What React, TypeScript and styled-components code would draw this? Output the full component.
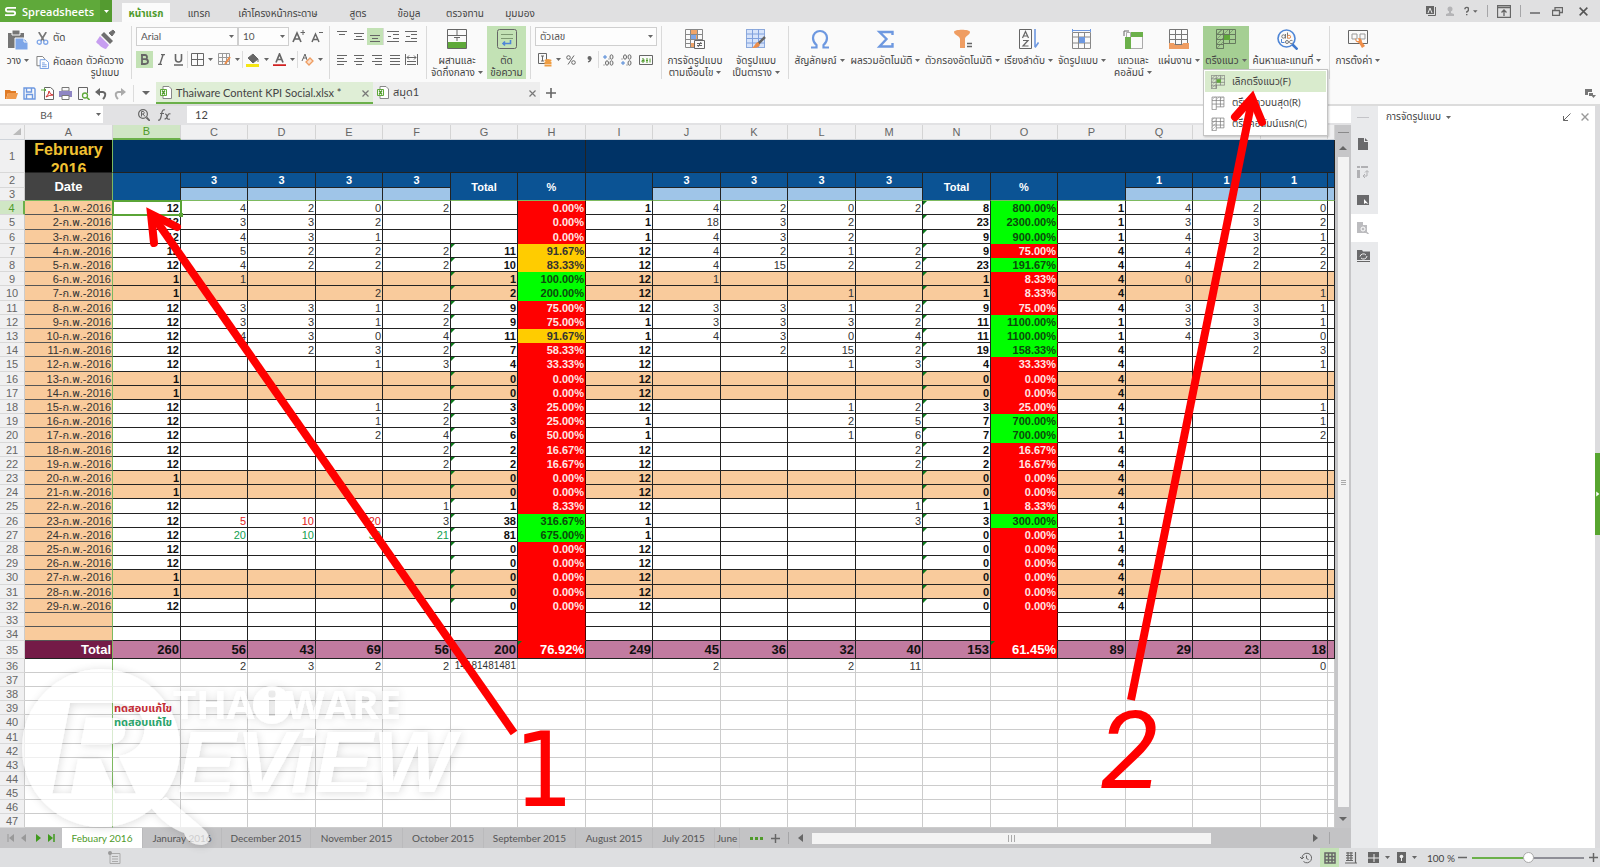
import React from "react";
import styled, { createGlobalStyle, css } from "styled-components";

const UI = `Lato, "Noto Sans Thai", "Loma", "Waree", "Noto Sans", sans-serif`;
const CELL = `"Liberation Sans", "Noto Sans Thai", "Loma", sans-serif`;

const Global = createGlobalStyle`
  * { box-sizing: border-box; }
  body { margin: 0; background: #dedfe1; font-family: ${UI}; font-size: 11px; color: #444; }
  button { border: 0; padding: 0; background: none; font: inherit; color: inherit; cursor: pointer; }
`;

const Page = styled.div`
  position: relative;
  display: flex;
  flex-direction: column;
  min-height: 100vh;
  overflow: hidden;
`;

/* ---------- title bar ---------- */
const TitleBar = styled.header`
  display: flex;
  align-items: stretch;
  height: 22px;
  background: #e0e0e1;
`;
const AppMenu = styled.button`
  display: flex;
  align-items: center;
  gap: 6px;
  width: 112px;
  padding-left: 5px;
  background: #5fa93a;
  color: #fff;
  font-family: "Open Sans", sans-serif;
  font-size: 11px;
  font-weight: 600;
`;
const AppName = styled.span`
  flex: 1;
  text-align: left;
`;
const AppCaret = styled.span`
  display: flex;
  align-items: center;
  justify-content: center;
  width: 13px;
  height: 22px;
  background: #549b30;
`;
const MenuTabs = styled.nav`
  display: flex;
  align-items: flex-end;
  margin-left: 10px;
  flex: 1;
`;
const MenuTab = styled.button<{ $w: number; $active?: boolean }>`
  width: ${(p) => p.$w}px;
  height: 19px;
  padding-top: 2px;
  font-size: 10px;
  white-space: nowrap;
  background: ${(p) => (p.$active ? "#fbfbfb" : "transparent")};
  color: ${(p) => (p.$active ? "#4f9a2b" : "#444")};
  font-weight: ${(p) => (p.$active ? 700 : 400)};
`;
const WindowTools = styled.div`
  display: flex;
  align-items: center;
  gap: 9px;
  padding-right: 8px;
`;
const ToolSep = styled.span`
  width: 1px;
  height: 12px;
  background: #a6a6a8;
`;

/* ---------- ribbon ---------- */
const Ribbon = styled.div`
  display: flex;
  height: 60px;
  padding-top: 4px;
  background: #fafafa;
`;
const Group = styled.div<{ $w?: number; $last?: boolean }>`
  display: flex;
  flex: none;
  width: ${(p) => (p.$w ? `${p.$w}px` : "auto")};
  height: 53px;
  border-right: ${(p) => (p.$last ? "0" : "1px solid #dadada")};
`;
const BigButton = styled.button<{ $w: number; $on?: boolean }>`
  display: flex;
  flex-direction: column;
  align-items: center;
  flex: none;
  width: ${(p) => p.$w}px;
  padding-top: 3px;
  font-size: 10px;
  line-height: 12px;
  white-space: nowrap;
  background: ${(p) => (p.$on ? "#c3e2b5" : "transparent")};
  svg { flex: none; }
`;
const BigLabel = styled.span`
  display: flex;
  align-items: center;
  gap: 3px;
`;
const IconBox = styled.span`
  display: flex;
  height: 25px;
`;
const Stack = styled.div<{ $w?: number }>`
  display: flex;
  flex-direction: column;
  flex: none;
  width: ${(p) => (p.$w ? `${p.$w}px` : "auto")};
`;
const SmallRow = styled.div<{ $h?: number; $gap?: number; $pad?: number }>`
  display: flex;
  align-items: center;
  height: ${(p) => p.$h ?? 25}px;
  gap: ${(p) => p.$gap ?? 4}px;
  padding-left: ${(p) => p.$pad ?? 0}px;
`;
const LabeledButton = styled.button`
  display: flex;
  align-items: center;
  gap: 4px;
  height: 24px;
  font-size: 10px;
  white-space: nowrap;
`;
const IconButton = styled.button<{ $w: number; $on?: boolean }>`
  display: flex;
  align-items: center;
  justify-content: center;
  gap: 4px;
  flex: none;
  width: ${(p) => p.$w}px;
  height: 17px;
  background: ${(p) => (p.$on ? "#c3e2b5" : "transparent")};
`;
const RowSep = styled.span`
  flex: none;
  width: 1px;
  height: 17px;
  background: #dcdcdc;
`;
const SelectWrap = styled.label<{ $w: number }>`
  position: relative;
  display: flex;
  width: ${(p) => p.$w}px;
  height: 19px;
  svg { position: absolute; right: 4px; top: 8px; pointer-events: none; }
`;
const Select = styled.select`
  appearance: none;
  width: 100%;
  border: 1px solid #cfcfcf;
  border-radius: 0;
  padding: 0 4px;
  background: #fdfdfd;
  color: #555;
  font: 10px ${UI};
`;
const FreezeWrap = styled.div`
  position: relative;
  flex: none;
  height: 43px;
  background: #a5cf93;
`;
const FreezeMenu = styled.div`
  position: absolute;
  z-index: 5;
  left: 0;
  top: 43px;
  width: 125px;
  padding: 1px;
  border: 1px solid #c4c4c4;
  background: #fff;
  box-shadow: 1px 1px 2px rgba(0, 0, 0, 0.2);
`;
const MenuItem = styled.button<{ $on?: boolean }>`
  display: flex;
  align-items: center;
  gap: 7px;
  width: 100%;
  height: 21px;
  padding-left: 6px;
  font-size: 10px;
  white-space: nowrap;
  background: ${(p) => (p.$on ? "#d9ebcd" : "transparent")};
`;

/* ---------- document bar ---------- */
const DocBar = styled.div`
  display: flex;
  align-items: center;
  height: 24px;
  padding-left: 2px;
  background: #fafafa;
  border-bottom: 2px solid #dcdcdc;
`;
const QuickTools = styled.div`
  display: flex;
  align-items: center;
  width: 154px;
`;
const QuickButton = styled.button`
  display: flex;
  justify-content: center;
  width: 18px;
`;
const QuickSep = styled(RowSep)`
  margin: 0 3px 0 5px;
`;
const DocTab = styled.div<{ $w: number; $active?: boolean }>`
  display: flex;
  align-items: center;
  gap: 4px;
  width: ${(p) => p.$w}px;
  height: 22px;
  padding: 0 4px;
  background: ${(p) => (p.$active ? "#dfeed6" : "#eeeeee")};
  border-bottom: 2px solid ${(p) => (p.$active ? "#6bb04a" : "#eeeeee")};
  white-space: nowrap;
`;
const DocName = styled.span`
  flex: 1;
`;
const NewDoc = styled.button`
  display: flex;
  margin-left: 6px;
`;
const Spacer = styled.span`
  flex: 1;
`;

/* ---------- workspace ---------- */
const Workspace = styled.main`
  display: flex;
  flex: 1;
  align-items: stretch;
`;
const Book = styled.section`
  display: flex;
  flex-direction: column;
  flex: 1;
  min-width: 0;
`;
const FormulaBar = styled.div`
  display: flex;
  align-items: stretch;
  height: 19px;
  padding-bottom: 2px;
  background: #e2e2e4;
`;
const NameBox = styled.label`
  position: relative;
  display: flex;
  width: 103px;
  svg { position: absolute; right: 2px; top: 7px; }
`;
const NameInput = styled.input`
  width: 100%;
  border: 0;
  padding: 0 12px 0 2px;
  text-align: center;
  font: 10px ${UI};
  color: #555;
  background: #fff;
`;
const FormulaTools = styled.div`
  display: flex;
  align-items: center;
  justify-content: flex-end;
  gap: 8px;
  width: 84px;
  padding-right: 16px;
`;
const FormulaInput = styled.input`
  flex: 1;
  border: 0;
  padding: 0 8px;
  font: 11px ${UI};
  color: #444;
  background: #fff;
`;
const GridRow = styled.div`
  display: flex;
  flex: 1;
  background: #fff;
`;
const GridArea = styled.div`
  flex: 1;
  min-width: 0;
  overflow: hidden;
`;
const Table = styled.table`
  width: 100%;
  table-layout: fixed;
  border-collapse: separate;
  border-spacing: 0;
  font: 11px/12px ${CELL};
  color: #222;
`;
const HeadRow = styled.tr`
  height: 15px;
`;
const ColHead = styled.th<{ $on?: boolean }>`
  padding: 0;
  height: 15px;
  font-weight: 400;
  line-height: 13px;
  color: ${(p) => (p.$on ? "#4f9a2b" : "#666")};
  background: ${(p) => (p.$on ? "#d0e6c5" : "#f0f0f1")};
  border-right: 1px solid #d4d4d4;
  border-bottom: ${(p) => (p.$on ? "2px solid #6bb04a" : "1px solid #cfd4da")};
`;
const Row = styled.tr<{ $h: number }>`
  height: ${(p) => p.$h}px;
`;
const RowHead = styled.th<{ $on?: boolean }>`
  padding: 0;
  overflow: hidden;
  font-weight: 400;
  color: ${(p) => (p.$on ? "#4f9a2b" : "#666")};
  background: ${(p) => (p.$on ? "#d0e6c5" : "#f0f0f1")};
  border-bottom: 1px solid #d8d8d8;
  border-right: ${(p) => (p.$on ? "2px solid #6bb04a" : "1px solid #ccc")};
`;
type CellProps = {
  $bg?: string;
  $fg?: string;
  $bold?: boolean;
  $size?: number;
  $align?: "left" | "center";
  $right?: string;
  $bottom?: string;
  $mark?: boolean;
  $active?: boolean;
};
const Cell = styled.td<CellProps>`
  position: relative;
  padding: 0 1px;
  text-align: ${(p) => p.$align ?? "right"};
  white-space: nowrap;
  color: ${(p) => p.$fg ?? "#333"};
  background: ${(p) => p.$bg ?? "#fff"};
  font-weight: ${(p) => (p.$bold ? 700 : 400)};
  font-size: ${(p) => p.$size ?? 11}px;
  border-right: 1px solid ${(p) => p.$right ?? "#222"};
  border-bottom: 1px solid ${(p) => p.$bottom ?? "#222"};
  ${(p) =>
    p.$mark &&
    css`
      &::before {
        content: "";
        position: absolute;
        left: 0;
        top: 0;
        border-top: 4px solid #0a7a1a;
        border-right: 4px solid transparent;
      }
    `}
  ${(p) =>
    p.$active &&
    css`
      outline: 2px solid #5aa436;
      outline-offset: -1px;
      z-index: 1;
      &::after {
        content: "";
        position: absolute;
        right: -3px;
        bottom: -3px;
        width: 4px;
        height: 4px;
        background: #5aa436;
      }
    `}
`;
const Note = styled.span`
  position: relative;
  z-index: 4;
`;
const MonthTitle = styled.div`
  height: 32px;
  overflow: hidden;
  font-size: 16px;
  line-height: 20px;
  white-space: normal;
`;
const VScroll = styled.div`
  display: flex;
  flex-direction: column;
  align-items: center;
  width: 16px;
  background: #c6c6c8;
`;
const SplitHandle = styled.span`
  width: 11px;
  height: 1px;
  margin: 7px 0 6px;
  background: #8a8a8a;
`;
const ScrollArrow = styled.button`
  display: flex;
  align-items: center;
  justify-content: center;
  width: 14px;
  height: 18px;
`;
const VThumb = styled.div`
  display: flex;
  align-items: center;
  justify-content: center;
  flex: 1;
  width: 11px;
  margin-bottom: 3px;
  background: #f3f3f3;
`;

/* ---------- sheet tabs ---------- */
const SheetBar = styled.nav`
  display: flex;
  align-items: stretch;
  height: 20px;
  background: #c3c3c5;
`;
const SheetArrows = styled.div`
  display: flex;
  align-items: center;
  justify-content: space-between;
  width: 62px;
  padding: 0 7px;
`;
const SheetTab = styled.button<{ $w: number; $active?: boolean }>`
  flex: none;
  width: ${(p) => p.$w}px;
  overflow: hidden;
  white-space: nowrap;
  font-size: 10px;
  color: ${(p) => (p.$active ? "#4f9a2b" : "#555")};
  background: ${(p) => (p.$active ? "#fff" : "transparent")};
  border-right: 1px solid #bababc;
`;
const SheetTools = styled.div`
  display: flex;
  align-items: center;
  gap: 8px;
  padding: 0 7px 0 10px;
`;
const HTrack = styled.div`
  display: flex;
  align-items: center;
  flex: 1;
`;
const HThumb = styled.div`
  display: flex;
  align-items: center;
  justify-content: center;
  flex: 0 0 80%;
  height: 11px;
  background: #f3f3f3;
`;
const HEnd = styled.div`
  display: flex;
  align-items: center;
  gap: 10px;
  padding-right: 21px;
`;

/* ---------- side panel ---------- */
const SideStrip = styled.aside`
  display: flex;
  flex-direction: column;
  align-items: stretch;
  width: 27px;
  background: #e9eaec;
`;
const StripGrip = styled.span`
  width: 12px;
  height: 1px;
  margin: 11px 0 12px 6px;
  background: #c4c4c8;
`;
const StripButton = styled.button<{ $on?: boolean }>`
  display: flex;
  align-items: center;
  justify-content: center;
  height: 28px;
  padding-right: 3px;
  background: ${(p) => (p.$on ? "#fff" : "transparent")};
`;
const Panel = styled.aside`
  flex: 0 0 217px;
  background: #fff;
`;
const PanelHead = styled.div`
  display: flex;
  align-items: center;
  gap: 10px;
  height: 22px;
  padding: 0 6px 0 8px;
  font-size: 10px;
`;
const PanelTitle = styled.button`
  display: flex;
  align-items: center;
  gap: 5px;
`;
const Edge = styled.div`
  display: flex;
  align-items: center;
  width: 5px;
  padding-top: 34px;
  background: #dcdcde;
`;
const EdgeHandle = styled.button`
  display: flex;
  align-items: center;
  width: 5px;
  height: 82px;
  background: #57a52f;
`;

/* ---------- status bar ---------- */
const StatusBar = styled.footer`
  display: flex;
  align-items: center;
  height: 19px;
  padding: 0 2px 0 108px;
  background: #dedfe1;
  font-size: 10px;
`;
const StatusButton = styled.button<{ $w: number; $on?: boolean }>`
  display: flex;
  align-items: center;
  justify-content: center;
  gap: 6px;
  width: ${(p) => p.$w}px;
  height: 19px;
  background: ${(p) => (p.$on ? "#c3e2b5" : "transparent")};
`;
const ZoomText = styled.output`
  width: 32px;
  margin-left: 6px;
  text-align: center;
`;
const ZoomSlider = styled.input`
  appearance: none;
  width: 112px;
  height: 12px;
  margin: 0 4px;
  background: linear-gradient(90deg, #6bb04a 50%, #8e8e96 50%) center / 100% 2px no-repeat;
  &::-webkit-slider-thumb {
    appearance: none;
    width: 11px;
    height: 11px;
    border: 1px solid #aaa;
    border-radius: 50%;
    background: #fff;
  }
`;

const Overlay = styled.svg<{ $z: number }>`
  position: absolute;
  left: 0;
  top: 0;
  z-index: ${(p) => p.$z};
  pointer-events: none;
`;

/* ---------- icons ---------- */
const Caret = ({ c = "#666" }: { c?: string }) => (
  <svg width="5" height="3" viewBox="0 0 5 3">
    <path d="M0 0h5L2.500 3z" fill={c} />
  </svg>
);
const Tri = ({ dir, c = "#666" }: { dir: "l" | "r" | "u" | "d"; c?: string }) => {
  const d = { l: "M6 0v8L1 4z", r: "M2 0v8l5-4z", u: "M0 6h8L4 2z", d: "M0 2h8L4 6z" }[dir];
  return <svg width="8" height="8" viewBox="0 0 8 8"><path d={d} fill={c} /></svg>;
};
const I = ({ w = 14, h, vb, children }: { w?: number; h?: number; vb?: string; children: React.ReactNode }) => (
  <svg width={w} height={h ?? w} viewBox={vb ?? `0 0 ${w} ${h ?? w}`} fill="none" stroke="#666" strokeWidth="1">
    {children}
  </svg>
);
const Lines = ({ rows, w = 12 }: { rows: [number, number, number][]; w?: number }) => (
  <I w={w} h={12}>{rows.map(([x, y, l]) => <path key={y} d={`M${x} ${y}.500h${l}`} />)}</I>
);
const Close = ({ s = 7, c = "#777" }) => <I w={s} vb="0 0 7 7"><path d="M.5.5l6 6M6.500.5l-6 6" stroke={c} strokeWidth="1.200" /></I>;
const Plus = ({ s = 10 }) => <I w={s} vb="0 0 10 10"><path d="M5 0v10M0 5h10" strokeWidth="1.600" /></I>;
const FreezeIcon = ({ s, kind, c = "#777" }: { s: number; kind: "all" | "row" | "col"; c?: string }) => (
  <I w={s} vb="0 0 20 20">
    <g stroke={c}>
      <path d={kind === "all" ? "M.5.5h19v14h-12v5h-7zM.5 5.500h19M.5 10.500h19M.5 15.500h7M7.500.5v19M13.500.5v14" : "M1.500 1.500h17v14h-11v4h-6zM1.500 6.500h17M1.500 11.500h17M7.500 1.500v14M13.500 1.500v14"} />
      {kind !== "row" && <path d="M1 5l4-4M1 10l6-6M1 15l6-6M1 19l6-6" strokeWidth=".6" />}
      {kind !== "col" && <path d="M8 5l4-4M13 5l4-4M2 5l4-4" strokeWidth=".6" />}
    </g>
    {kind === "all" && <rect x="8" y="6" width="6" height="5" fill="#5fa93a" stroke="none" />}
  </I>
);

const PasteIcon = () => (
  <I w={22}>
    <path d="M1 4h16v15H1z" fill="#757575" stroke="none" />
    <path d="M5 1h8v5H5z" fill="#757575" stroke="#fafafa" />
    <path d="M8 9h9l4 4v8H8z" fill="#7ea6e8" stroke="#fafafa" />
    <path d="M17 9v4h4" stroke="#fafafa" />
  </I>
);
const CutIcon = () => (
  <I w={13} vb="0 0 14 14">
    <path d="M3 0l6 10M11 0L5 10" stroke="#777" strokeWidth="1.800" />
    <circle cx="3.500" cy="11" r="2.200" stroke="#7ea6e8" strokeWidth="1.400" />
    <circle cx="10.500" cy="11" r="2.200" stroke="#7ea6e8" strokeWidth="1.400" />
  </I>
);
const CopyIcon = () => (
  <I w={13} vb="0 0 14 14">
    <path d="M1 .5h6l2 2v8H1z" fill="#fff" stroke="#777" />
    <path d="M4.500 4h6l3 3v6.500h-9z" fill="#fff" stroke="#6d98e0" />
    <path d="M6.500 7.500h3M6.500 9.500h5M6.500 11.500h5" stroke="#6d98e0" />
  </I>
);
const PainterIcon = () => (
  <I w={21}>
    <path d="M14 4l4-3 2 2-3 4z" fill="#6f6f6f" stroke="#6f6f6f" />
    <path d="M9 3l9 9-3 3-9-9z" fill="#6f6f6f" stroke="none" />
    <path d="M5 7l9 9-3 4c-3 0-7-4-10-7z" fill="#c79ef0" stroke="none" />
  </I>
);
const MergeIcon = () => (
  <I w={20}>
    <path d="M.5.5h19v19H.5zM.5 6.500h19M10 .5v6M10 13v6" />
    <rect x="1" y="13" width="18" height="6" fill="#5fa93a" stroke="none" />
    <path d="M7 8.500h6M10 8.500v3.500" />
  </I>
);
const WrapIcon = () => (
  <I w={20}>
    <rect x=".5" y=".5" width="19" height="19" rx="2" />
    <path d="M4 5.500h12M4 9.500h12" stroke="#7d9a72" />
    <path d="M13.500 11v3.500h-7M8 12.500l-2 2 2 2" stroke="#4f86d6" strokeWidth="1.600" />
  </I>
);
const CondIcon = () => (
  <I w={20}>
    <path d="M.5.5h17v18H.5zM.5 5.500h17M.5 10.500h17M.5 14.500h17M5.500.5v18M12.500.5v18" stroke="#888" />
    <path d="M6 1h6v4H6z M8 6h4v4H8z M6 14h4v4H6z" fill="#f0a468" stroke="none" />
    <path d="M6 6h5v4H6z" fill="#7ea6e8" stroke="none" />
    <path d="M9.500 11.500h10v8h-10z" fill="#fafafa" />
    <path d="M12 14.500h5M12 16.500h5M16 13l-3 5" />
  </I>
);
const TableStyleIcon = () => (
  <I w={20}>
    <rect x=".5" y=".5" width="18" height="18" fill="#d6e3fa" stroke="#8ca9dc" />
    <path d="M.5 5h18M.5 9.500h18M.5 14h18M6.500.5v18M12.500.5v18" stroke="#7fa0dd" />
    <path d="M19 8l-7 7" stroke="#666" strokeWidth="2.500" />
    <path d="M12 13l2 3c-2 3-5 3-8 3 3-2 3-5 6-6z" fill="#ee8e4a" stroke="none" />
  </I>
);
const OmegaIcon = () => (
  <I w={20}>
    <path d="M1 18.500h5.500v-2.500C4 14 3 11.500 3 9c0-4 3-7 7-7s7 3 7 7c0 2.500-1 5-3.500 7v2.500H19" stroke="#6d98e0" strokeWidth="2.200" />
  </I>
);
const SigmaIcon = () => (
  <I w={20}>
    <path d="M16.500 6V3H3.500l7 7-7 7.500h13v-3.500" stroke="#6d98e0" strokeWidth="2.400" />
  </I>
);
const FilterIcon = () => (
  <I w={20}>
    <path d="M1 3c0-3 16-3 16 0 0 3-5 4-5 7v9H7v-9C7 7 1 6 1 3z" fill="#ef9d62" stroke="none" />
    <path d="M14 14.500h5M14 17.500h5" strokeWidth="1.400" />
  </I>
);
const SortIcon = () => (
  <I w={20}>
    <path d="M.5.5h12v19H.5z" />
    <path d="M3.500 9l3-6.500L9.500 9M4.500 7h4M4 11.500h5L4 17h5.500" strokeWidth="1.200" />
    <path d="M16 0v18M19.500 13.500L16 18.500" stroke="#6d98e0" strokeWidth="1.600" />
  </I>
);
const CellFmtIcon = () => (
  <I w={20}>
    <path d="M.5 3.500h18v16H.5zM.5 8h18M.5 14h18M6.500 3.500v16M12.500 3.500v16" stroke="#888" />
    <path d="M7 8h6v6H7z" fill="#6d98e0" stroke="none" />
    <path d="M.5 0v3M18.500 0v3M0 1.500h19" stroke="#6d98e0" />
  </I>
);
const RowsColsIcon = () => (
  <I w={20}>
    <path d="M7.500 3.500h12v16h-12zM3.500 8V3.500H7" stroke="#aaa" />
    <path d="M8 3h12v5H8zM2 8h6v12H2z" fill="#6bb04a" stroke="none" />
    <path d="M1 7V2h5" />
  </I>
);
const SheetIcon = () => (
  <I w={20}>
    <path d="M.5.5h18v15H.5zM.5 5.500h18M.5 10.500h18M6.500.5v15M12.500.5v15" stroke="#777" />
    <path d="M0 14h5l1 2h7l1-2h6v6H0z" fill="#ef9d62" stroke="none" />
  </I>
);
const FindIcon = () => (
  <I w={21}>
    <circle cx="9.500" cy="9.500" r="8.500" stroke="#4f86d6" strokeWidth="1.600" />
    <path d="M15.500 15.500l5 5" stroke="#3f78cc" strokeWidth="2.500" />
    <circle cx="6.500" cy="7.500" r="1.700" stroke="#777" />
    <path d="M8.500 5v4.500M10.500 3.500v6" stroke="#777" />
    <circle cx="12" cy="7.800" r="1.600" stroke="#e88c4a" />
    <path d="M4.500 10v3.500h3" stroke="#4f86d6" />
    <circle cx="10" cy="13" r="1.500" stroke="#777" />
    <path d="M15.500 11.700c-2-1-3 .3-3 1.300s1 2.200 3 1.200" stroke="#777" />
  </I>
);
const SettingsIcon = () => (
  <I w={20}>
    <path d="M.5 1.500h19v13H.5z" />
    <path d="M4 5h5v5H4zM12 5h5v5h-5z" stroke="#999" />
    <path d="M7 9c0 4 2 4 4 5l3 5 3-2-3-4c0-2-1-4-4-4l1 3-2 0z" fill="#ee8e4a" stroke="none" />
  </I>
);
const DocIcon = () => (
  <I w={12} h={13}>
    <path d="M3 .5h6l2.500 2.500v9.500H3z" fill="#fff" stroke="#888" />
    <path d="M.5 3.500h6v6h-6z" fill="#fff" stroke="#5fa93a" />
    <path d="M2 4.500l3 4M5 4.500l-3 4" stroke="#4f9a2b" strokeWidth="1.300" />
  </I>
);
const GridIcon = () => <I w={13}><path d="M.5.5h12v12H.5zM6.500.5v12M.5 6.500h12" /></I>;

/* ---------- data ---------- */
const letters = "ABCDEFGHIJKLMNOPQRS".split("");
const weekend = [9, 10, 16, 17, 23, 24, 30, 31];
const pairs: [string, string, string][] = [
  ["12,4,2,0,2,,0.00", "1,4,2,0,2,8,800.00", "1,4,2,0"],
  ["12,3,3,2,,,0.00", "1,18,3,2,,23,2300.00", "1,3,3,2"],
  ["12,4,3,1,,,0.00", "1,4,3,2,,9,900.00", "1,4,3,1"],
  ["12,5,2,2,2,11,91.67", "12,4,2,1,2,9,75.00", "4,4,2,2"],
  ["12,4,2,2,2,10,83.33", "12,4,15,2,2,23,191.67", "4,4,2,2"],
  ["1,1,,,,1,100.00", "12,1,,,,1,8.33", "4,0,,"],
  ["1,,,2,,2,200.00", "12,,,1,,1,8.33", "4,,,1"],
  ["12,3,3,1,2,9,75.00", "12,3,3,1,2,9,75.00", "4,3,3,1"],
  ["12,3,3,1,2,9,75.00", "1,3,3,3,2,11,1100.00", "1,3,3,1"],
  ["12,4,3,0,4,11,91.67", "1,4,3,0,4,11,1100.00", "1,4,3,0"],
  ["12,,2,3,2,7,58.33", "12,,2,15,2,19,158.33", "4,,2,3"],
  ["12,,,1,3,4,33.33", "12,,,1,3,4,33.33", "4,,,1"],
  ["1,,,,,0,0.00", "12,,,,,0,0.00", "4,,,"],
  ["1,,,,,0,0.00", "12,,,,,0,0.00", "4,,,"],
  ["12,,,1,2,3,25.00", "12,,,1,2,3,25.00", "4,,,1"],
  ["12,,,1,2,3,25.00", "1,,,2,5,7,700.00", "1,,,1"],
  ["12,,,2,4,6,50.00", "1,,,1,6,7,700.00", "1,,,2"],
  ["12,,,,2,2,16.67", "12,,,,2,2,16.67", "4,,,"],
  ["12,,,,2,2,16.67", "12,,,,2,2,16.67", "4,,,"],
  ["1,,,,,0,0.00", "12,,,,,0,0.00", "4,,,"],
  ["1,,,,,0,0.00", "12,,,,,0,0.00", "4,,,"],
  ["12,,,,1,1,8.33", "12,,,,1,1,8.33", "4,,,"],
  ["12,5,10,20,3,38,316.67", "1,,,,3,3,300.00", "1,,,"],
  ["12,20,10,30,21,81,675.00", "1,,,,,0,0.00", "1,,,"],
  ["12,,,,,0,0.00", "12,,,,,0,0.00", "4,,,"],
  ["12,,,,,0,0.00", "12,,,,,0,0.00", "4,,,"],
  ["1,,,,,0,0.00", "12,,,,,0,0.00", "4,,,"],
  ["1,,,,,0,0.00", "12,,,,,0,0.00", "4,,,"],
  ["12,,,,,0,0.00", "12,,,,,0,0.00", "4,,,"],
  [",,,,,,", ",,,,,,", ",,,"],
  [",,,,,,", ",,,,,,", ",,,"],
];
const totals = "260,56,43,69,56,200,76.92%,249,45,36,32,40,153,61.45%,89,29,23,18,".split(",");
const row36 = ",2,3,2,2,14181481481,,,2,,2,11,,,,,,0,".split(",");
const RED = "#ff0000";
const BLUE = "#0b5394";
const PALE = "#9fc5e8";
const PEACH = "#f9cb9c";
const GREEN_LINE = "#7dba5f";

const rateColors = (v: string) => {
  const n = parseFloat(v || "0");
  if (n >= 100) return { bg: "#00ff00", fg: "#0c4a0c" };
  if (n >= 80) return { bg: "#ffcc00", fg: "#333" };
  return { bg: RED, fg: "#ffe5e5" };
};

function DataRow({ n, parts }: { n: number; parts: [string, string, string] }) {
  const values = [...parts.join(",").split(","), ""];
  const base = weekend.includes(n) ? PEACH : "#fff";
  return (
    <Row $h={n % 5 === 0 ? 15 : 14}>
      <RowHead scope="row" $on={n === 4}>{n}</RowHead>
      <Cell $bg={PEACH} $right={GREEN_LINE} $bottom="#555">{n < 33 ? `${n - 3}-ก.พ.-2016` : ""}</Cell>
      {values.map((v, i) => {
        if (i === 6 || i === 13) {
          const c = rateColors(v);
          return <Cell key={i} $bold $bg={c.bg} $fg={c.fg} $bottom={c.bg} $right="#500">{v && `${v}%`}</Cell>;
        }
        const fg = n === 26 && i > 0 && i < 4 ? "#e02020" : n === 27 && i > 0 && i < 5 ? "#12a050" : undefined;
        const strong = [0, 5, 7, 12, 14].includes(i);
        return (
          <Cell key={i} $bg={base} $bold={strong} $fg={strong ? "#111" : fg} $mark={(i === 5 || i === 12) && v !== ""} $active={n === 4 && i === 0}>
            {v}
          </Cell>
        );
      })}
    </Row>
  );
}

function Sheet() {
  const top = (v: string, key: string) => <Cell key={key} $align="center" $bold $bg={BLUE} $fg="#fff">{v}</Cell>;
  const tall = (v: string, key: string) => <Cell key={key} rowSpan={2} $align="center" $bold $bg={BLUE} $fg="#fff" $bottom={GREEN_LINE}>{v}</Cell>;
  return (
    <Table>
      <colgroup>
        <col width={25} />
        <col width={88} />
        {letters.slice(1).map((l, i) => <col key={l} width={i % 2 ? 67 : 68} />)}
        <col />
      </colgroup>
      <thead>
        <HeadRow>
          <ColHead aria-label="All"><I w={20} h={9}><path d="M19 1v7h-8z" fill="#bbb" stroke="none" /></I></ColHead>
          {letters.map((l) => <ColHead key={l} scope="col" $on={l === "B"}>{l}</ColHead>)}
          <ColHead />
        </HeadRow>
      </thead>
      <tbody>
        <Row $h={33}>
          <RowHead scope="row">1</RowHead>
          <Cell $align="center" $bold $bg="#000" $fg="#f1c232" $right={GREEN_LINE} $bottom="#222"><MonthTitle>February 2016</MonthTitle></Cell>
          <Cell colSpan={7} $bg="#003366" />
          <Cell colSpan={12} $bg="#003366" />
        </Row>
        <Row $h={15}>
          <RowHead scope="row">2</RowHead>
          <Cell rowSpan={2} $align="center" $bold $size={13} $bg="#434343" $fg="#fff" $right={GREEN_LINE} $bottom={GREEN_LINE}>Date</Cell>
          {tall("", "B")}
          {["C", "D", "E", "F"].map((k) => top("3", k))}
          {tall("Total", "G")}
          {tall("%", "H")}
          {tall("", "I")}
          {["J", "K", "L", "M"].map((k) => top("3", k))}
          {tall("Total", "N")}
          {tall("%", "O")}
          {tall("", "P")}
          {["Q", "R", "S"].map((k) => top("1", k))}
          {top("", "T")}
        </Row>
        <Row $h={13}>
          <RowHead scope="row">3</RowHead>
          {Array.from({ length: 12 }, (_, i) => <Cell key={i} $bg={PALE} $bottom={GREEN_LINE} />)}
        </Row>
        {pairs.map((p, i) => <DataRow key={i} n={i + 4} parts={p} />)}
        <Row $h={18}>
          <RowHead scope="row">35</RowHead>
          <Cell $bold $size={13} $bg="#741b47" $fg="#fff" $right={GREEN_LINE}>Total</Cell>
          {totals.map((v, i) => {
            const rate = i === 6 || i === 13;
            return <Cell key={i} $bold $size={13} $mark={rate} $bg={rate ? RED : "#c27ba0"} $fg={rate ? "#fff" : "#111"}>{v}</Cell>;
          })}
        </Row>
        {Array.from({ length: 12 }, (_, r) => r + 36).map((n) => (
          <Row key={n} $h={n === 40 ? 15 : 14}>
            <RowHead scope="row">{n}</RowHead>
            <Cell $right={GREEN_LINE} $bottom="#ccc" />
            {row36.map((v, i) => {
              const note = i === 0 && (n === 39 || n === 40);
              return (
                <Cell
                  key={i}
                  $right="#ccc"
                  $bottom="#ccc"
                  $size={v.length > 9 ? 10 : 11}
                  $bold={note}
                  $align={note ? "left" : undefined}
                  $fg={note ? (n === 39 ? "#c22b35" : "#2aa36a") : undefined}
                >
                  {note ? <Note>ทดสอบแก้ไข</Note> : n === 36 ? v : ""}
                </Cell>
              );
            })}
          </Row>
        ))}
      </tbody>
    </Table>
  );
}

const tools: { w: number; label: string[]; icon: React.ReactNode }[] = [
  { w: 61, label: ["สัญลักษณ์"], icon: <OmegaIcon /> },
  { w: 71, label: ["ผลรวมอัตโนมัติ"], icon: <SigmaIcon /> },
  { w: 83, label: ["ตัวกรองอัตโนมัติ"], icon: <FilterIcon /> },
  { w: 49, label: ["เรียงลำดับ"], icon: <SortIcon /> },
  { w: 58, label: ["จัดรูปแบบ"], icon: <CellFmtIcon /> },
  { w: 44, label: ["แถวและ", "คอลัมน์"], icon: <RowsColsIcon /> },
  { w: 48, label: ["แผ่นงาน"], icon: <SheetIcon /> },
];

function Big({ w, label, icon, on, caret = true }: { w: number; label: string[]; icon: React.ReactNode; on?: boolean; caret?: boolean }) {
  return (
    <BigButton $w={w} $on={on}>
      <IconBox>{icon}</IconBox>
      {label.map((l, i) => (
        <BigLabel key={l}>{l}{caret && i === label.length - 1 && <Caret />}</BigLabel>
      ))}
    </BigButton>
  );
}

const sheets: [string, number][] = [
  ["Febuary 2016", 81], ["Januray 2016", 79], ["December 2015", 89], ["November 2015", 92], ["October 2015", 81],
  ["September 2015", 92], ["August 2015", 77], ["July 2015", 62], ["June", 25],
];

export default function App() {
  return (
    <Page>
      <Global />
      <TitleBar>
        <AppMenu>
          <I w={12} h={11}><path d="M12 1.500H3Q1 1.500 1 3.500T3 5.500H9Q11 5.500 11 7.500T9 9.500H0" stroke="#fff" strokeWidth="2" /></I>
          <AppName>Spreadsheets</AppName>
          <AppCaret><Caret c="#fff" /></AppCaret>
        </AppMenu>
        <MenuTabs>
          <MenuTab $w={48} $active>หน้าแรก</MenuTab>
          <MenuTab $w={58}>แทรก</MenuTab>
          <MenuTab $w={100}>เค้าโครงหน้ากระดาษ</MenuTab>
          <MenuTab $w={60}>สูตร</MenuTab>
          <MenuTab $w={42}>ข้อมูล</MenuTab>
          <MenuTab $w={70}>ตรวจทาน</MenuTab>
          <MenuTab $w={40}>มุมมอง</MenuTab>
        </MenuTabs>
        <WindowTools>
          <IconButton $w={10} aria-label="Language"><I w={10}><path d="M0 0h8v8H0z" fill="#666" stroke="none" /><path d="M2 7l2-5 2 5" stroke="#eee" /><path d="M9.500 1v8.500H2" /></I></IconButton>
          <IconButton $w={10} aria-label="Account"><I w={10}><circle cx="5" cy="3" r="2.500" fill="#b4b4b6" stroke="none" /><path d="M4 5h2v2l3 1v2H1V8l3-1z" fill="#b4b4b6" stroke="none" /></I></IconButton>
          <IconButton $w={14} aria-label="Help"><I w={6} h={10}><path d="M1 3q0-2 2-2t2 2-2 3v1M3 8.300v1.500" strokeWidth="1.600" /></I><Caret /></IconButton>
          <ToolSep />
          <IconButton $w={14} aria-label="Hide ribbon"><I w={14} h={13}><path d="M.5.5h13v12H.5zM.5 2.500h13M7 11V5M4.500 7.500L7 5l2.500 2.500" strokeWidth="1.300" /></I></IconButton>
          <ToolSep />
          <IconButton $w={10} aria-label="Minimize"><I w={10}><path d="M0 7h10" strokeWidth="1.500" /></I></IconButton>
          <IconButton $w={16} aria-label="Restore"><I w={11} h={9}><path d="M.5 3.500h7v5h-7zM3 3V.5h7.500v5H8" strokeWidth="1.300" /></I></IconButton>
          <IconButton $w={18} aria-label="Close"><Close s={9} c="#555" /></IconButton>
        </WindowTools>
      </TitleBar>

      <Ribbon>
        <Group $w={132}>
          <Big w={36} label={["วาง"]} icon={<PasteIcon />} />
          <Stack $w={47}>
            <LabeledButton><CutIcon />ตัด</LabeledButton>
            <LabeledButton><CopyIcon />คัดลอก</LabeledButton>
          </Stack>
          <Big w={44} label={["ตัวคัดวาง", "รูปแบบ"]} icon={<PainterIcon />} caret={false} />
        </Group>
        <Group $w={198}>
          <Stack>
            <SmallRow $h={20} $pad={4} $gap={0}>
              <SelectWrap $w={102}><Select aria-label="Font"><option>Arial</option></Select><Caret /></SelectWrap>
              <SelectWrap $w={51}><Select aria-label="Font size"><option>10</option></Select><Caret /></SelectWrap>
              <IconButton $w={19} aria-label="Grow font"><I w={13}><path d="M1 12L5 3l4 9M2.500 9h5" strokeWidth="1.700" /><path d="M11 0v5M8.500 2.500h5" /></I></IconButton>
              <IconButton $w={18} aria-label="Shrink font"><I w={12} h={13}><path d="M1 12l3.500-8L8 12M2.500 9.500h4" strokeWidth="1.500" /><path d="M8 2.500h4" /></I></IconButton>
            </SmallRow>
            <SmallRow $h={27} $pad={4} $gap={0}>
              <IconButton $w={17} $on aria-label="Bold"><I w={9} h={11}><path d="M2 1v9M1 1h4q2 0 2 2.200T5 5.200H2M5 5.200q3 0 3 2.400T5 10H1" strokeWidth="1.800" /></I></IconButton>
              <IconButton $w={17} aria-label="Italic"><I w={7} h={11}><path d="M3 .5h4M0 10.500h4M5 1L2 10" strokeWidth="1.400" /></I></IconButton>
              <IconButton $w={17} aria-label="Underline"><I w={9} h={12}><path d="M1.500 0v5q0 3 3 3t3-3V0M0 11h9" strokeWidth="1.600" /></I></IconButton>
              <RowSep />
              <IconButton $w={28} aria-label="Borders"><GridIcon /><Caret /></IconButton>
              <IconButton $w={26} aria-label="Draw borders"><I w={13}><path d="M.5.5h11v11H.5zM4.500.5v11M8.500.5v11M.5 4.500h11M.5 8.500h11" stroke="#999" /><path d="M12 4l-5 7" stroke="#ee8e4a" strokeWidth="2" /></I><Caret /></IconButton>
              <RowSep />
              <IconButton $w={28} aria-label="Fill color"><I w={14}><path d="M2 5l5-4 5 5-5 4z" fill="#666" /><path d="M12 6v3" /><path d="M0 12.500h13" stroke="#f5e614" strokeWidth="3" /></I><Caret /></IconButton>
              <IconButton $w={26} aria-label="Font color"><I w={13}><path d="M3 9.500L6.500 1 10 9.500M4 6.500h5" strokeWidth="1.700" /><path d="M0 12.500h13" stroke="#d02020" strokeWidth="2.500" /></I><Caret /></IconButton>
              <RowSep />
              <IconButton $w={28} aria-label="Clear"><I w={13}><path d="M1 8l3-7 2 6M2 5h4" /><path d="M5 9l4-4 3 3-4 4z" fill="#fbe0cc" stroke="#ee9d62" strokeWidth="1.300" /></I><Caret /></IconButton>
            </SmallRow>
          </Stack>
        </Group>
        <Group $w={97}>
          <Stack>
            <SmallRow $h={20} $pad={3} $gap={0}>
              <IconButton $w={17} aria-label="Top"><Lines rows={[[1, 1, 10], [3, 4, 6]]} /></IconButton>
              <IconButton $w={17} aria-label="Middle"><Lines rows={[[1, 3, 10], [3, 6, 6], [1, 9, 10]]} /></IconButton>
              <IconButton $w={16} $on aria-label="Bottom"><Lines rows={[[1, 5, 10], [3, 8, 6], [1, 11, 10]]} /></IconButton>
              <RowSep />
              <IconButton $w={18} aria-label="Decrease indent"><Lines rows={[[0, 1, 12], [6, 4, 6], [1, 6, 3], [6, 8, 6], [0, 11, 12]]} /></IconButton>
              <IconButton $w={17} aria-label="Increase indent"><Lines rows={[[0, 1, 12], [6, 4, 6], [1, 6, 4], [6, 8, 6], [0, 11, 12]]} /></IconButton>
            </SmallRow>
            <SmallRow $h={27} $pad={3} $gap={0}>
              <IconButton $w={17} aria-label="Left"><Lines rows={[[1, 1, 10], [1, 4, 7], [1, 7, 10], [1, 10, 7]]} /></IconButton>
              <IconButton $w={18} aria-label="Center"><Lines rows={[[1, 1, 10], [3, 4, 6], [1, 7, 10], [3, 10, 6]]} /></IconButton>
              <IconButton $w={18} aria-label="Right"><Lines rows={[[1, 1, 10], [4, 4, 7], [1, 7, 10], [4, 10, 7]]} /></IconButton>
              <IconButton $w={17} aria-label="Justify"><Lines rows={[[1, 1, 10], [1, 4, 10], [1, 7, 10], [1, 10, 10]]} /></IconButton>
              <IconButton $w={17} aria-label="Distribute"><I w={13} h={12}><path d="M.5 0v11M12.500 0v11M2 3.500h9M4 1.500l-2 2 2 2M9 1.500l2 2-2 2M2 7.500h9M2 10.500h9" /></I></IconButton>
            </SmallRow>
          </Stack>
        </Group>
        <Group $w={104}>
          <Big w={60} label={["ผสานและ", "จัดกึ่งกลาง"]} icon={<MergeIcon />} />
          <Big w={39} on label={["ตัด", "ข้อความ"]} icon={<WrapIcon />} caret={false} />
        </Group>
        <Group $w={131}>
          <Stack>
            <SmallRow $h={20} $pad={4}>
              <SelectWrap $w={122}><Select aria-label="Number format"><option>ตัวเลข</option></Select><Caret /></SelectWrap>
            </SmallRow>
            <SmallRow $h={27} $pad={5} $gap={0}>
              <IconButton $w={26} aria-label="Currency"><I w={14}><path d="M.5.5h8v10h-8zM4.500 3v5M3 3h3M3 8h3" /><ellipse cx="10" cy="7.500" rx="3.500" ry="1.500" fill="#ef9d42" stroke="none" /><path d="M6.500 10h7M6.500 12.500h7" stroke="#ef9d42" strokeWidth="1.800" /></I><Caret /></IconButton>
              <IconButton $w={18} aria-label="Percent"><I w={10}><circle cx="2.500" cy="2.500" r="1.800" /><circle cx="7.500" cy="7.500" r="1.800" /><path d="M8 .5l-6 9" /></I></IconButton>
              <IconButton $w={18} aria-label="Comma"><I w={5} h={8}><circle cx="2.500" cy="2" r="2" fill="#666" stroke="none" /><path d="M4 2q0 3-3 4" strokeWidth="1.300" /></I></IconButton>
              <RowSep />
              <IconButton $w={18} aria-label="Increase decimal"><I w={11} h={12}><path d="M0 3h4M2 1v4" stroke="#4f86d6" /><ellipse cx="8.500" cy="3" rx="1.500" ry="2.200" /><ellipse cx="4" cy="9" rx="1.500" ry="2.200" /><ellipse cx="8.500" cy="9" rx="1.500" ry="2.200" /><path d="M.5 11h1M5.500 5h1" /></I></IconButton>
              <IconButton $w={18} aria-label="Decrease decimal"><I w={11} h={12}><ellipse cx="4" cy="3" rx="1.500" ry="2.200" /><ellipse cx="8.500" cy="3" rx="1.500" ry="2.200" /><path d="M.5 5h1M5.500 11h1" /><path d="M0 9h4M2 7v4" stroke="#4f86d6" /><ellipse cx="8.500" cy="9" rx="1.500" ry="2.200" /></I></IconButton>
              <IconButton $w={22} aria-label="Fit"><I w={14} h={10}><path d="M.5.5h13v9H.5z" /><path d="M3 4q2-1 2 1v2H3V5.500h2M7 4h2M7 7h2M7 5.500h2M11 3.500v4" stroke="#4f9a2b" /></I></IconButton>
            </SmallRow>
          </Stack>
        </Group>
        <Group $w={127}>
          <Big w={66} label={["การจัดรูปแบบ", "ตามเงื่อนไข"]} icon={<CondIcon />} />
          <Big w={56} label={["จัดรูปแบบ", "เป็นตาราง"]} icon={<TableStyleIcon />} />
        </Group>
        <Group $w={541}>
          {tools.map((t) => <Big key={t.label[0]} {...t} />)}
          <FreezeWrap>
            <Big w={46} label={["ตรึงแนว"]} icon={<FreezeIcon s={20} kind="all" c="#667a5e" />} />
            <FreezeMenu>
              <MenuItem $on><FreezeIcon s={14} kind="all" />เลิกตรึงแนว(F)</MenuItem>
              <MenuItem><FreezeIcon s={14} kind="row" />ตรึงแถวบนสุด(R)</MenuItem>
              <MenuItem><FreezeIcon s={14} kind="col" />ตรึงคอลัมน์แรก(C)</MenuItem>
            </FreezeMenu>
          </FreezeWrap>
          <Big w={76} label={["ค้นหาและแทนที่"]} icon={<FindIcon />} />
        </Group>
        <Group $last>
          <Big w={56} label={["การตั้งค่า"]} icon={<SettingsIcon />} />
        </Group>
      </Ribbon>

      <DocBar>
        <QuickTools>
          <QuickButton aria-label="Open"><I w={13}><path d="M0 3h5l1 1h5v2H3l-2 6H0z" fill="#e07a24" stroke="none" /><path d="M3 6h10l-2 6H1z" fill="#f09a4c" stroke="none" /></I></QuickButton>
          <QuickButton aria-label="Save"><I w={13}><path d="M1 1h10l1 1v10H1zM3.500 1v4h5V1M3.500 12V7.500h6V12" stroke="#6d98e0" strokeWidth="1.400" /></I></QuickButton>
          <QuickButton aria-label="PDF"><I w={13}><path d="M3.500.5h6L12.500 3v9.500h-9z" fill="#fff" /><path d="M5 10q3-3 3-6 1 4 4 4-4 0-7 2" stroke="#d03030" /><path d="M0 3h5M3 1l2 2-2 2" stroke="#5fa93a" /></I></QuickButton>
          <QuickButton aria-label="Print"><I w={13}><path d="M3 .5h7V4H3z" stroke="#777" /><path d="M0 4h13v6H0z" fill="#8f86c4" stroke="none" /><path d="M3 8.500h7v4H3z" fill="#fff" stroke="#777" /></I></QuickButton>
          <QuickButton aria-label="Preview"><I w={13}><path d="M10.500 6V.5h-9v12H6" /><circle cx="8" cy="8.500" r="2.500" stroke="#5fa93a" strokeWidth="1.300" /><path d="M10 10.500l2.500 2.500" stroke="#5fa93a" strokeWidth="1.600" /></I></QuickButton>
          <QuickButton aria-label="Undo"><I w={13}><path d="M2 5h6q4 1 1 6l-1 1" strokeWidth="2" /><path d="M0 5l5-4v8z" fill="#666" stroke="none" /></I></QuickButton>
          <QuickButton aria-label="Redo"><I w={13}><path d="M11 5H5q-4 1-1 6l1 1" stroke="#aaa" strokeWidth="2" /><path d="M13 5L8 1v8z" fill="#aaa" stroke="none" /></I></QuickButton>
          <QuickSep />
          <QuickButton aria-label="More"><Tri dir="d" /></QuickButton>
        </QuickTools>
        <DocTab $w={217} $active><DocIcon /><DocName>Thaiware Content KPI Social.xlsx *</DocName><button aria-label="Close file"><Close /></button></DocTab>
        <DocTab $w={167}><DocIcon /><DocName>สมุด1</DocName><button aria-label="Close file"><Close /></button></DocTab>
        <NewDoc aria-label="New"><Plus /></NewDoc>
        <Spacer />
        <IconButton $w={20} aria-label="Window options"><I w={11}><path d="M0 1h7v3H3v3H0zM4 5h4v3H4z" fill="#777" stroke="none" /><path d="M6 7h5L8.500 10z" fill="#777" stroke="none" /></I></IconButton>
      </DocBar>

      <Workspace>
        <Book>
          <FormulaBar>
            <NameBox><NameInput aria-label="Cell" defaultValue="B4" /><Caret /></NameBox>
            <FormulaTools>
              <I w={12}><circle cx="5" cy="5" r="4.400" strokeWidth="1.200" /><path d="M8.500 8.500L12 12" strokeWidth="1.800" /><path d="M3.500 7.500v-5h2q1.500 1.200 0 2.500h-2M5 5l2 2.500" /></I>
              <I w={13} h={12}><path d="M0 11q2 1 3-3l1-5q1-3 3-2M2 4.500h4M7 5q2 0 2 3t3 2M12.500 5q-2-1-3 2t-3 3" strokeWidth="1.200" /></I>
            </FormulaTools>
            <FormulaInput aria-label="Formula" defaultValue="12" />
          </FormulaBar>
          <GridRow>
            <GridArea><Sheet /></GridArea>
            <VScroll>
              <SplitHandle />
              <ScrollArrow aria-label="Up"><Tri dir="u" /></ScrollArrow>
              <VThumb><I w={7} h={7}><path d="M1 1.500h5M1 3.500h5M1 5.500h5" stroke="#aaa" /></I></VThumb>
              <ScrollArrow aria-label="Down"><Tri dir="d" /></ScrollArrow>
            </VScroll>
          </GridRow>
          <SheetBar>
            <SheetArrows>
              <I w={8} h={8}><path d="M1 0v8" stroke="#999" /><path d="M7 0v8L2 4z" fill="#999" stroke="none" /></I>
              <Tri dir="l" c="#999" />
              <Tri dir="r" c="#3f9a1c" />
              <I w={8} h={8}><path d="M7 0v8" stroke="#3f9a1c" strokeWidth="1.500" /><path d="M1 0v8l5-4z" fill="#3f9a1c" stroke="none" /></I>
            </SheetArrows>
            {sheets.map(([name, w], i) => <SheetTab key={name} $w={w} $active={i === 0}>{name}</SheetTab>)}
            <SheetTools>
              <I w={13} h={3}><path d="M0 1.500h13" stroke="#4f9a2b" strokeWidth="3" strokeDasharray="3 2" /></I>
              <Plus s={9} />
              <ToolSep />
              <Tri dir="l" />
            </SheetTools>
            <HTrack><HThumb><I w={9} h={7}><path d="M1.500 0v7M4.500 0v7M7.500 0v7" stroke="#aaa" /></I></HThumb></HTrack>
            <HEnd><Tri dir="r" /><ToolSep /></HEnd>
          </SheetBar>
        </Book>
        <SideStrip>
          <StripGrip />
          <StripButton aria-label="New"><I w={12}><path d="M1 0h6v4h4v8H1z" fill="#6a6a6c" stroke="none" /><path d="M8 0l3 3H8z" fill="#6a6a6c" stroke="none" /></I></StripButton>
          <StripButton aria-label="Styles"><I w={12}><path d="M0 0h3v2H0zM4 0h7v2H4zM0 4h3v8H0z" fill="#b0b0b3" stroke="none" /><path d="M6 10h4V5M8 8l-2 2 2 2M8 6.500L10 4.500l2 2" stroke="#b0b0b3" /></I></StripButton>
          <StripButton aria-label="Selection"><I w={12}><path d="M0 1h12v10H0z" fill="#6a6a6c" stroke="none" /><path d="M7 5v5l1.500-1 3 1z" fill="#fff" stroke="none" /></I></StripButton>
          <StripButton $on aria-label="Properties"><I w={12}><path d="M0 0h6v3h4v8H0z" fill="#bcbcbf" stroke="none" /><circle cx="6" cy="7" r="2" stroke="#fff" /><path d="M8 9l3.500 3" stroke="#bcbcbf" strokeWidth="1.500" /></I></StripButton>
          <StripButton aria-label="Backup"><I w={13} h={12}><path d="M0 0h5l1 1.500h7V10H0z" fill="#6a6a6c" stroke="none" /><path d="M3 6.500a3.500 3.500 0 0 1 6-1.500M10 6a3.500 3.500 0 0 1-6 2" stroke="#eee" /><path d="M0 11.500h13" /></I></StripButton>
        </SideStrip>
        <Panel>
          <PanelHead>
            <PanelTitle>การจัดรูปแบบ <Caret /></PanelTitle>
            <Spacer />
            <button aria-label="Undock"><I w={8}><path d="M7.500.5l-7 7M.5 3v4.500H5" /></I></button>
            <button aria-label="Close panel"><Close s={8} c="#999" /></button>
          </PanelHead>
        </Panel>
        <Edge><EdgeHandle aria-label="Collapse"><Tri dir="r" c="#fff" /></EdgeHandle></Edge>
      </Workspace>

      <StatusBar>
        <I w={13}><path d="M2 2.500h10v10H2zM4 5.500h6M4 8h6M4 10.500h6" stroke="#aaa" /><circle cx="2" cy="2" r="2" fill="#999" stroke="none" /></I>
        <Spacer />
        <StatusButton $w={28} aria-label="History"><I w={12}><path d="M2 6a4.800 4.800 0 1 1 1.500 3.500M0 5l2 2 2-2M6.500 3.500v3l2 1" /></I></StatusButton>
        <StatusButton $w={19} $on aria-label="Normal"><I w={12}><path d="M1 1h10v10H1zM1 4.500h10M1 8h10M4.500 1v10M8 1v10" strokeWidth="1.500" /></I></StatusButton>
        <StatusButton $w={24} aria-label="Page"><I w={12}><path d="M1 1h7M1 3.500h7M1 6h7M1 8.500h7M10.500 0v11M0 11h12M3 0v8M6 0v8" strokeWidth="1.200" /></I></StatusButton>
        <StatusButton $w={32} aria-label="Read"><I w={11}><path d="M0 0h11v11H0z" fill="#666" stroke="none" /><path d="M0 6h11M6 2v8" stroke="#eee" /></I><Caret /></StatusButton>
        <StatusButton $w={24} aria-label="Protect"><I w={9} h={11}><path d="M0 0h9v11H0z" fill="#666" stroke="none" /><circle cx="4.500" cy="4.500" r="1.800" fill="#eee" stroke="none" /><path d="M4.500 5v4" stroke="#eee" /></I><Caret /></StatusButton>
        <ZoomText>100 %</ZoomText>
        <StatusButton $w={11} aria-label="Zoom out"><I w={9}><path d="M0 4.500h9" strokeWidth="1.500" /></I></StatusButton>
        <ZoomSlider type="range" aria-label="Zoom" min={0} max={100} defaultValue={50} />
        <StatusButton $w={10} aria-label="Zoom in"><Plus s={9} /></StatusButton>
      </StatusBar>

      <Overlay $z={3} width="480" height="867" viewBox="0 0 480 867" aria-hidden="true">
        <defs>
          <filter id="soft" x="-10%" y="-10%" width="120%" height="120%">
            <feDropShadow dx="1" dy="1" stdDeviation="5" floodColor="#000" floodOpacity="0.2" />
          </filter>
          <mask id="cut">
            <rect width="480" height="867" fill="#fff" />
            <text x="50" y="793" fontFamily="Liberation Sans" fontWeight="700" fontStyle="italic" fontSize="132" fill="#000">R</text>
            <rect x="269" y="700" width="6" height="16" fill="#000" />
            <circle cx="272" cy="694" r="4" fill="#000" />
          </mask>
        </defs>
        <g opacity="0.7">
          <g filter="url(#soft)">
            <g mask="url(#cut)" fill="#fff">
              <circle cx="101" cy="748" r="79" />
              <path d="M150 806l16-9 40 34q8 12-4 14-14 0-18-12-18-6-34-27z" />
              <circle cx="272" cy="705" r="19" />
            </g>
            <g fill="#fff" fontWeight="700">
              <text x="173" y="719" fontFamily="Open Sans" fontSize="40">THA</text>
              <text x="286" y="719" fontFamily="Open Sans" fontSize="40">WARE</text>
              <text x="178" y="792" fontFamily="Liberation Sans" fontStyle="italic" fontSize="87">EViEW</text>
            </g>
          </g>
        </g>
      </Overlay>
      <Overlay $z={8} width="1300" height="830" viewBox="0 0 1300 830">
        <g fill="none" stroke="#ff0000" strokeWidth="8">
          <path d="M514 733L153 216" />
          <path d="M154 243L151 214L177 227" strokeLinecap="round" />
          <path d="M1131 700L1252 100" />
          <path d="M1235 117L1252 98L1262 122" strokeLinecap="round" />
        </g>
        <g fill="#ff0000">
          <text x="514" y="806" fontFamily="DejaVu Sans Condensed, DejaVu Sans" fontSize="104">1</text>
          <text x="1100" y="788" fontFamily="Roboto" fontStyle="italic" fontSize="108">2</text>
        </g>
      </Overlay>
    </Page>
  );
}
